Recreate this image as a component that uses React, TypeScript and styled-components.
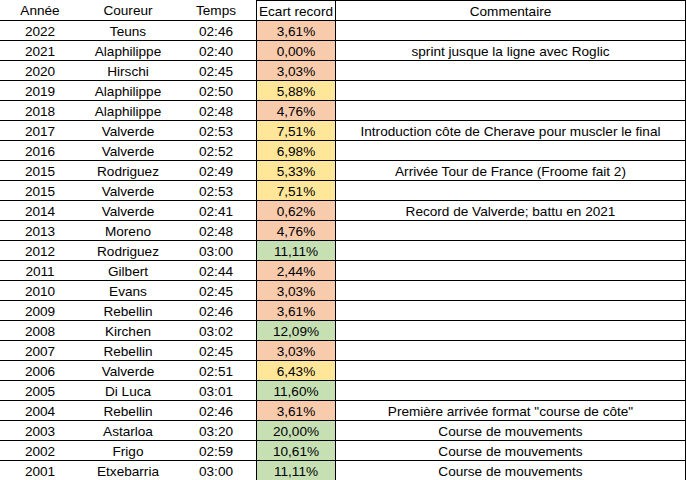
import styled, { createGlobalStyle } from "styled-components";

const GlobalStyle = createGlobalStyle`
  html, body {
    margin: 0;
    padding: 0;
    background: #ffffff;
  }
  body {
    font-family: "Liberation Sans", Arial, sans-serif;
    font-size: 13.6px;
    color: #000000;
  }
`;

const Sheet = styled.div`
  width: 687px;
  height: 480px;
  overflow: hidden;
  background: #ffffff;
`;

const Row = styled.div<{ $header?: boolean }>`
  display: grid;
  grid-template-columns: 80px 96px 80px 79px 351px;
  height: 20px;
  box-sizing: border-box;
  border-top: ${(p) => (p.$header ? "none" : "1px solid #000")};
  width: 686px;
`;

const Cell = styled.div`
  display: flex;
  align-items: center;
  justify-content: center;
  white-space: nowrap;
  line-height: 19px;
  padding-top: 1px;
  box-sizing: border-box;
  overflow: hidden;
`;

const Ecart = styled(Cell)<{ $fill: string; $header?: boolean }>`
  background: ${(p) => p.$fill};
  border-left: 1px solid #000;
  border-top: ${(p) => (p.$header ? "1px solid #000" : "none")};
`;

const Comment = styled(Cell)<{ $header?: boolean }>`
  border-left: 1px solid #000;
  border-right: 1px solid #000;
  border-top: ${(p) => (p.$header ? "1px solid #000" : "none")};
`;

type Race = {
  year: string;
  rider: string;
  time: string;
  gap: string;
  note?: string;
};

const races: Race[] = [
  { year: "2022", rider: "Teuns", time: "02:46", gap: "3,61%" },
  { year: "2021", rider: "Alaphilippe", time: "02:40", gap: "0,00%", note: "sprint jusque la ligne avec Roglic" },
  { year: "2020", rider: "Hirschi", time: "02:45", gap: "3,03%" },
  { year: "2019", rider: "Alaphilippe", time: "02:50", gap: "5,88%" },
  { year: "2018", rider: "Alaphilippe", time: "02:48", gap: "4,76%" },
  { year: "2017", rider: "Valverde", time: "02:53", gap: "7,51%", note: "Introduction côte de Cherave pour muscler le final" },
  { year: "2016", rider: "Valverde", time: "02:52", gap: "6,98%" },
  { year: "2015", rider: "Rodriguez", time: "02:49", gap: "5,33%", note: "Arrivée Tour de France (Froome fait 2)" },
  { year: "2015", rider: "Valverde", time: "02:53", gap: "7,51%" },
  { year: "2014", rider: "Valverde", time: "02:41", gap: "0,62%", note: "Record de Valverde; battu en 2021" },
  { year: "2013", rider: "Moreno", time: "02:48", gap: "4,76%" },
  { year: "2012", rider: "Rodriguez", time: "03:00", gap: "11,11%" },
  { year: "2011", rider: "Gilbert", time: "02:44", gap: "2,44%" },
  { year: "2010", rider: "Evans", time: "02:45", gap: "3,03%" },
  { year: "2009", rider: "Rebellin", time: "02:46", gap: "3,61%" },
  { year: "2008", rider: "Kirchen", time: "03:02", gap: "12,09%" },
  { year: "2007", rider: "Rebellin", time: "02:45", gap: "3,03%" },
  { year: "2006", rider: "Valverde", time: "02:51", gap: "6,43%" },
  { year: "2005", rider: "Di Luca", time: "03:01", gap: "11,60%" },
  { year: "2004", rider: "Rebellin", time: "02:46", gap: "3,61%", note: "Première arrivée format \"course de côte\"" },
  { year: "2003", rider: "Astarloa", time: "03:20", gap: "20,00%", note: "Course de mouvements" },
  { year: "2002", rider: "Frigo", time: "02:59", gap: "10,61%", note: "Course de mouvements" },
  { year: "2001", rider: "Etxebarria", time: "03:00", gap: "11,11%", note: "Course de mouvements" },
];

// same thresholds as the conditional formatting in the sheet
const gapColor = (gap: string) => {
  const v = parseFloat(gap.replace(",", "."));
  if (v > 10) return "#c6e0b4";
  if (v >= 5) return "#ffe699";
  return "#f8cbad";
};

export default function App() {
  return (
    <Sheet>
      <GlobalStyle />
      <Row $header>
        <Cell>Année</Cell>
        <Cell>Coureur</Cell>
        <Cell>Temps</Cell>
        <Ecart $fill="#ffffff" $header>
          Ecart record
        </Ecart>
        <Comment $header>Commentaire</Comment>
      </Row>
      {races.map((r, i) => (
        <Row key={i}>
          <Cell>{r.year}</Cell>
          <Cell>{r.rider}</Cell>
          <Cell>{r.time}</Cell>
          <Ecart $fill={gapColor(r.gap)}>{r.gap}</Ecart>
          <Comment>{r.note}</Comment>
        </Row>
      ))}
    </Sheet>
  );
}
